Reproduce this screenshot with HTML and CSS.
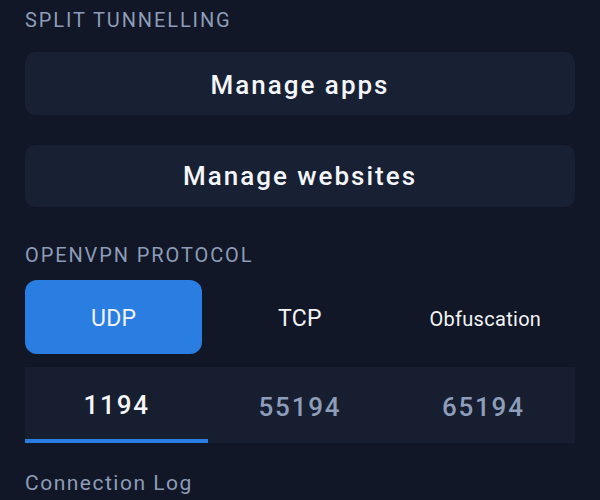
FILE: index.html
```html
<!DOCTYPE html>
<html>
<head>
<meta charset="utf-8">
<link rel="stylesheet" href="styles.css">
</head>
<body>
<div class="page">
  <div class="label first">SPLIT TUNNELLING</div>
  <div class="card-btn">Manage apps</div>
  <div class="card-btn second">Manage websites</div>
  <div class="label proto">OPENVPN PROTOCOL</div>
  <div class="segments">
    <div class="seg active">UDP</div>
    <div class="seg">TCP</div>
    <div class="seg small">Obfuscation</div>
  </div>
  <div class="ports">
    <div class="port active">1194</div>
    <div class="port">55194</div>
    <div class="port">65194</div>
  </div>
  <div class="log">Connection Log</div>
</div>
</body>
</html>
```

FILE: styles.css
```css
html, body {
  margin: 0;
  padding: 0;
  background: #111726;
  height: 100%;
  overflow: hidden;
}
.page {
  padding: 0 25px;
  font-family: Roboto, "Noto Sans", sans-serif;
}
.label {
  color: #8d9cb8;
  font-size: 20px;
  letter-spacing: 1.9px;
  line-height: 20px;
}
.label.first {
  padding-top: 10px;
}
.card-btn {
  margin-top: 22px;
  height: 63px;
  border-radius: 10px;
  background: #182033;
  color: #f4f6fa;
  font-size: 26px;
  font-weight: 500;
  letter-spacing: 2px;
  display: flex;
  align-items: center;
  justify-content: center;
  box-sizing: border-box;
  padding-top: 2px;
}
.card-btn.second {
  margin-top: 30px;
  height: 62px;
  padding-top: 0;
}
.label.proto {
  margin-top: 38px;
}
.segments {
  margin-top: 15px;
  display: grid;
  grid-template-columns: 1fr 1fr 1fr;
  height: 74px;
}
.seg {
  display: flex;
  align-items: center;
  justify-content: center;
  color: #f2f4f8;
  font-size: 23px;
  letter-spacing: 0.3px;
  box-sizing: border-box;
  padding-top: 3px;
}
.seg.small {
  font-size: 20px;
  padding-left: 4px;
}
.seg.active {
  background: #2a7de1;
  border-radius: 12px;
  margin-right: 6px;
}
.ports {
  margin-top: 13px;
  display: grid;
  grid-template-columns: 1fr 1fr 1fr;
  height: 76px;
  background: #161e2f;
}
.port {
  display: flex;
  align-items: center;
  justify-content: center;
  color: #8d9dba;
  font-size: 26px;
  font-weight: 500;
  letter-spacing: 1.8px;
  box-sizing: border-box;
  padding-top: 4px;
}
.port.active {
  color: #f4f6fa;
  border-bottom: 4px solid #2a7de1;
}
.log {
  margin-top: 28px;
  color: #8d9cb8;
  font-size: 21px;
  line-height: 24px;
  letter-spacing: 1.5px;
}
```
